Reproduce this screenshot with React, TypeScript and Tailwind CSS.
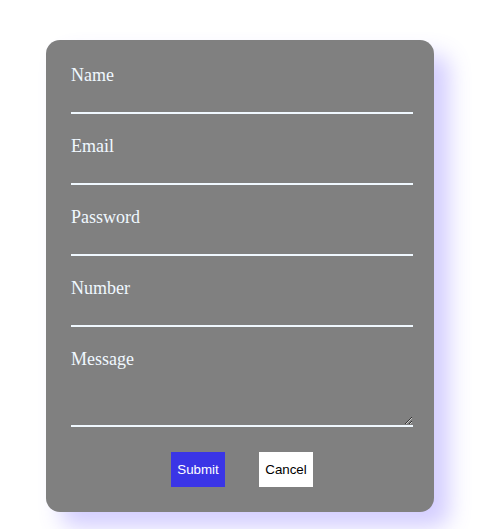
const fields = ["Name", "Email", "Password", "Number"];

export default function App() {
  return (
    <div className="min-h-[529px] bg-white pt-[40px] pl-[46px]">
      <form className="w-[388px] rounded-[14px] bg-[#808080] pt-[25px] pb-[25px] pl-[25px] pr-[21px] shadow-[15px_15px_22px_rgba(110,90,255,0.3)] font-['Liberation_Serif',serif]">
        {fields.map((f) => (
          <div key={f} className="mb-[22px] flex flex-col">
            <label className="h-[21px] text-[18px] leading-[21px] text-[#f0f8ff]">{f}</label>
            <input
              type="text"
              className="h-[28px] w-full border-0 border-b-2 border-[#f0f8ff] bg-transparent text-[#f0f8ff] outline-none"
            />
          </div>
        ))}
        <div className="flex flex-col">
          <label className="h-[21px] text-[18px] leading-[21px] text-[#f0f8ff]">Message</label>
          <textarea className="block h-[57px] w-full border-0 border-b-2 border-[#f0f8ff] bg-transparent text-[#f0f8ff] outline-none" />
        </div>
        <div className="mt-[25px] flex justify-center gap-[34px] font-['Liberation_Sans',Arial,sans-serif] text-[13.33px]">
          <button type="button" className="h-[35px] w-[54px] bg-[#3a35e6] text-white">Submit</button>
          <button type="button" className="h-[35px] w-[54px] bg-white text-black">Cancel</button>
        </div>
      </form>
    </div>
  );
}
